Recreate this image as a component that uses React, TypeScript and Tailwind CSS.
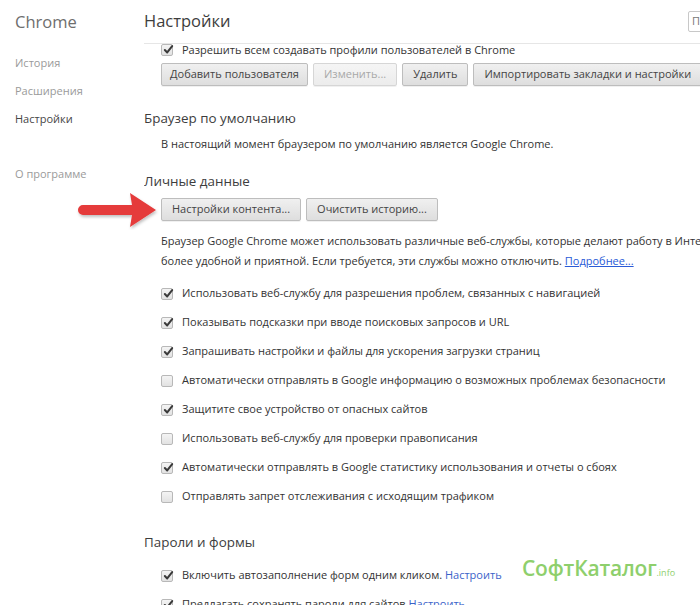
import React from 'react'

const font = { fontFamily: '"Open Sans", "Noto Sans", sans-serif' }

function Box({ checked }: { checked?: boolean }) {
  return (
    <div className="relative w-[12px] h-[12px] shrink-0 rounded-[2px] border border-[#b8b8b8] bg-gradient-to-b from-[#f4f4f4] to-[#e2e2e2]">
      {checked && (
        <svg viewBox="0 0 12 12" className="absolute left-[1px] top-[-1px] w-[11px] h-[11px]">
          <path d="M2 6.5 L4.6 9.2 L10 2.2" fill="none" stroke="#3a3a3a" strokeWidth="2.2" strokeLinecap="round" strokeLinejoin="round" />
        </svg>
      )}
    </div>
  )
}

function Check({ checked, children }: { checked?: boolean; children: React.ReactNode }) {
  return (
    <div className="h-[29px] flex items-center gap-[9px] whitespace-nowrap">
      <Box checked={checked} />
      <span>{children}</span>
    </div>
  )
}

function Btn({ children, disabled, tight }: { children: React.ReactNode; disabled?: boolean; tight?: boolean }) {
  return (
    <div
      className={`h-[23px] flex items-center shrink-0 rounded-[2px] border whitespace-nowrap shadow-[0_1px_0_rgba(0,0,0,0.06)] ${
        tight ? 'px-[8px]' : 'px-[10px]'
      } ${
        disabled
          ? 'border-[#d6d6d6] text-[#a8a8a8] bg-gradient-to-b from-[#f5f5f5] to-[#ececec]'
          : 'border-[#bdbdbd] text-[#444] bg-gradient-to-b from-[#f0f0f0] to-[#dedede]'
      }`}
    >
      {children}
    </div>
  )
}

const items = [
  { c: true, t: 'Использовать веб-службу для разрешения проблем, связанных с навигацией' },
  { c: true, t: 'Показывать подсказки при вводе поисковых запросов и URL' },
  { c: true, t: 'Запрашивать настройки и файлы для ускорения загрузки страниц' },
  { c: false, t: 'Автоматически отправлять в Google информацию о возможных проблемах безопасности' },
  { c: true, t: 'Защитите свое устройство от опасных сайтов' },
  { c: false, t: 'Использовать веб-службу для проверки правописания' },
  { c: true, t: 'Автоматически отправлять в Google статистику использования и отчеты о сбоях' },
  { c: false, t: 'Отправлять запрет отслеживания с исходящим трафиком' },
]

export default function App() {
  return (
    <div className="relative w-[700px] h-[605px] overflow-hidden bg-white flex text-[11px] text-[#333]" style={font}>
      <aside className="w-[144px] shrink-0 pl-[15px]">
        <div className="h-[44px] flex items-center text-[16.5px] text-[#6e6e6e]">Chrome</div>
        <div className="mt-[10px] h-[18px] flex items-center text-[#9a9a9a]">История</div>
        <div className="mt-[10px] h-[18px] flex items-center text-[#9a9a9a]">Расширения</div>
        <div className="mt-[10px] h-[18px] flex items-center text-[#464646]">Настройки</div>
        <div className="mt-[37px] h-[18px] flex items-center text-[#9a9a9a]">О программе</div>
      </aside>

      <main className="flex-1 min-w-0 overflow-hidden">
        <div className="h-[44px] flex items-center border-b border-[#e6e6e6]">
          <div className="w-[544px] shrink-0 text-[16.5px] text-[#3d3d3d]">Настройки</div>
          <div className="w-[160px] shrink-0 h-[21px] border border-[#c8c8c8] rounded-[2px] pl-[3px] flex items-center text-[#777]">П</div>
        </div>

        <div className="pl-[17px]">
          <div className="h-[12px] flex items-center gap-[9px] whitespace-nowrap">
            <Box checked />
            <span>Разрешить всем создавать профили пользователей в Chrome</span>
          </div>
          <div className="mt-[7px] flex gap-[5px]">
            <Btn tight>Добавить пользователя</Btn>
            <Btn disabled>Изменить...</Btn>
            <Btn>Удалить</Btn>
            <Btn>Импортировать закладки и настройки</Btn>
          </div>
        </div>

        <div className="mt-[22px] h-[20px] flex items-center text-[13.4px] text-[#3d3d3d]">Браузер по умолчанию</div>
        <div className="pl-[17px] mt-[8px] h-[16px] flex items-center whitespace-nowrap">
          В настоящий момент браузером по умолчанию является Google Chrome.
        </div>

        <div className="mt-[19px] h-[20px] flex items-center text-[13.4px] text-[#3d3d3d]">Личные данные</div>
        <div className="pl-[17px]">
          <div className="mt-[7px] flex gap-[5px]">
            <Btn>Настройки контента...</Btn>
            <Btn>Очистить историю...</Btn>
          </div>
          <div className="mt-[10px] leading-[20px] whitespace-nowrap">
            <div>Браузер Google Chrome может использовать различные веб-службы, которые делают работу в Интернете</div>
            <div>
              более удобной и приятной. Если требуется, эти службы можно отключить.{' '}
              <span className="text-[#2a5bd7] underline">Подробнее...</span>
            </div>
          </div>
          <div className="mt-[8px]">
            {items.map((i) => (
              <Check key={i.t} checked={i.c}>
                {i.t}
              </Check>
            ))}
          </div>
        </div>

        <div className="mt-[21px] h-[20px] flex items-center text-[13.4px] text-[#3d3d3d]">Пароли и формы</div>
        <div className="pl-[17px] mt-[9px]">
          <Check checked>
            Включить автозаполнение форм одним кликом. <span className="text-[#3b63c9]">Настроить</span>
          </Check>
          <Check checked>
            Предлагать сохранять пароли для сайтов <span className="text-[#3b63c9]">Настроить</span>
          </Check>
        </div>
      </main>

      {/* annotation arrow */}
      <svg className="absolute left-[74px] top-[190px] w-[86px] h-[40px]" viewBox="0 0 86 40">
        <defs>
          <filter id="sh" x="-10%" y="-20%" width="130%" height="150%">
            <feDropShadow dx="1" dy="2" stdDeviation="1.5" floodColor="#000" floodOpacity="0.25" />
          </filter>
        </defs>
        <g filter="url(#sh)">
          <path d="M9 15 L58 15 L56 3 L82 20 L56 37 L58 25 L9 25 A5 5 0 0 1 9 15 Z" fill="#e53a3a" />
        </g>
      </svg>

      {/* watermark */}
      <div className="absolute left-[522px] top-[553px] flex items-baseline text-[#8ecf6c] whitespace-nowrap" style={{ fontFamily: '"Open Sans", sans-serif' }}>
        <span className="text-[21px] font-semibold tracking-[-0.2px]">СофтКаталог</span>
        <span className="text-[9px]">.info</span>
      </div>
    </div>
  )
}
